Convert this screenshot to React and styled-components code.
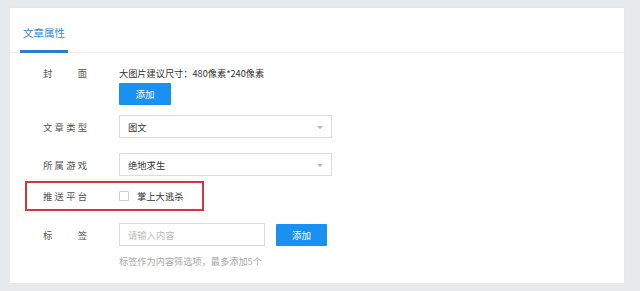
import React from "react";
import styled, { createGlobalStyle } from "styled-components";

const Global = createGlobalStyle`
  html, body { margin: 0; padding: 0; background: #e8e9ed; }
  body { font-family: "Noto Sans CJK SC", "Noto Sans", sans-serif; }
  * { box-sizing: border-box; }
`;

const Page = styled.div`
  width: 640px;
  height: 291px;
  padding: 8px 16px 8px 10px;
  background: #e8e9ed;
`;

const Panel = styled.div`
  background: #fff;
  height: 275px;
  box-shadow: 0 0 1px rgba(0,0,0,0.06);
  display: flex;
  flex-direction: column;
`;

const TabBar = styled.div`
  height: 45px;
  border-bottom: 1px solid #eef0f3;
  display: flex;
  align-items: flex-end;
  padding-left: 10px;
`;

const Tab = styled.div`
  width: 48px;
  height: 45px;
  display: flex;
  justify-content: center;
  align-items: center;
  padding-top: 6px;
  font-size: 10.5px;
  color: #3389d8;
  border-bottom: 3px solid #2a7dc6;
  margin-bottom: -1px;
`;

const Form = styled.div`
  display: flex;
  flex-direction: column;
  padding-top: 13px;
`;

const Row = styled.div`
  display: flex;
  align-items: ${(p) => (p.$top ? "flex-start" : "center")};
  padding-left: 33px;
  margin-top: ${(p) => p.$mt || 0}px;
`;

const Highlight = styled.div`
  display: flex;
  align-items: center;
  width: 179px;
  height: 30px;
  margin-left: 15px;
  padding-left: 16px;
  border: 2px solid #d8363c;
  margin-top: ${(p) => p.$mt || 0}px;
`;

const Label = styled.div`
  width: 44px;
  margin-right: 32px;
  font-size: 9.3px;
  line-height: 14px;
  color: #555;
  text-align: justify;
  text-align-last: justify;
  flex-shrink: 0;
`;

const Stack = styled.div`
  display: flex;
  flex-direction: column;
  align-items: flex-start;
`;

const Note = styled.div`
  font-size: 9.2px;
  line-height: 14px;
  color: #333;
`;

const Button = styled.button`
  width: ${(p) => p.$w || 52}px;
  height: 22px;
  margin-top: ${(p) => p.$mt || 0}px;
  margin-left: ${(p) => p.$ml || 0}px;
  border: none;
  border-radius: 1px;
  background: #1a91f1;
  color: #fff;
  font-family: inherit;
  font-size: 9.5px;
  padding: 0;
`;

const Select = styled.div`
  position: relative;
  width: 213px;
  height: 23px;
  border: 1px solid #dcdcdc;
  display: flex;
  align-items: center;
  padding-left: 8px;
  font-size: 9.3px;
  color: #333;
`;

const Arrow = styled.span`
  position: absolute;
  right: 8px;
  top: 50%;
  margin-top: -1px;
  width: 0;
  height: 0;
  border-left: 3.5px solid transparent;
  border-right: 3.5px solid transparent;
  border-top: 3.5px solid #b5b5b5;
`;

const Check = styled.span`
  width: 10px;
  height: 10px;
  border: 1px solid #cfcfcf;
  border-radius: 1px;
  background: #fff;
  margin-right: 8px;
`;

const CheckText = styled.span`
  font-size: 9.3px;
  color: #333;
`;

const Input = styled.div`
  width: 146px;
  height: 23px;
  border: 1px solid #dcdcdc;
  display: flex;
  align-items: center;
  padding-left: 8px;
  font-size: 9.3px;
  color: #bcbcbc;
`;

const Hint = styled.div`
  padding-left: 109px;
  margin-top: 8px;
  font-size: 9.2px;
  line-height: 14px;
  color: #a8a8a8;
`;

export default function App() {
  return (
    <>
      <Global />
      <Page>
        <Panel>
          <TabBar>
            <Tab>文章属性</Tab>
          </TabBar>
          <Form>
            <Row $top>
              <Label>封面</Label>
              <Stack>
                <Note>大图片建议尺寸：480像素*240像素</Note>
                <Button $mt={3}>添加</Button>
              </Stack>
            </Row>
            <Row $mt={10}>
              <Label>文章类型</Label>
              <Select>
                图文
                <Arrow />
              </Select>
            </Row>
            <Row $mt={15}>
              <Label>所属游戏</Label>
              <Select>
                绝地求生
                <Arrow />
              </Select>
            </Row>
            <Highlight $mt={5}>
              <Label>推送平台</Label>
              <Check />
              <CheckText>掌上大逃杀</CheckText>
            </Highlight>
            <Row $mt={12}>
              <Label>标签</Label>
              <Input>请输入内容</Input>
              <Button $ml={11} $w={51}>添加</Button>
            </Row>
            <Hint>标签作为内容筛选项，最多添加5个</Hint>
          </Form>
        </Panel>
      </Page>
    </>
  );
}
